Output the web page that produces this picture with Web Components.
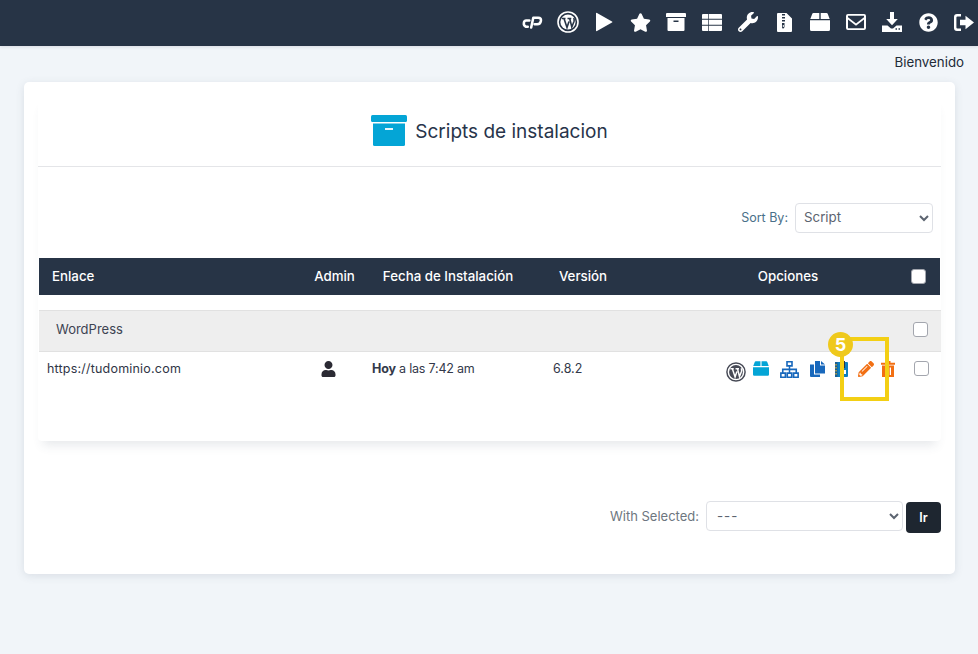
<!DOCTYPE html>
<html lang="es"><head><meta charset="utf-8"><title>Scripts de instalacion</title>
<style>
html,body{margin:0;padding:0;background:#f1f5f9;height:654px;overflow:hidden}
body{font-family:Inter,"Liberation Sans",sans-serif;color:#273446}
</style></head><body>
<app-topbar></app-topbar>
<welcome-line>Bienvenido</welcome-line>
<main-panel>
  <title-block>Scripts de instalacion</title-block>
  <sort-bar></sort-bar>
  <scripts-table></scripts-table>
</main-panel>
<script>
const ICONS={
cp:`<svg viewBox="0 0 40 26" width="21" height="14"><g fill="none" stroke="currentColor" stroke-width="4.800" stroke-linecap="round" stroke-linejoin="round"><path d="M14 10H8Q4 10 3.500 15T7.500 22H11"/><path d="M17.500 23.500L21.500 5H31Q37 5 36 11T29 17.500H24"/></g></svg>`,
wp:`<svg viewBox="0 0 22 22" width="22" height="22"><circle cx="11" cy="11" r="10" fill="none" stroke="currentColor" stroke-width="1.600"/><circle cx="11" cy="11" r="7.600" fill="currentColor"/><path d="M4.800 7.500H8.500M7 7.500L10 16.500L12 10.500M10.500 7.500H14.300M12.700 7.500L14.800 16L17 10.500Q17.600 8.500 16.600 7" fill="none" stroke="var(--wp-bg,#273446)" stroke-width="1.600"/></svg>`,
play:`<svg viewBox="0 0 18 20" width="18" height="20"><path d="M1 1.500Q1 .5 2 1L17 9.500Q18 10 17 10.500L2 19Q1 19.500 1 18.500Z" fill="currentColor"/></svg>`,
star:`<svg viewBox="0 0 576 512" width="21" height="19"><path fill="currentColor" d="M259.300 17.800L194 150.200 47.900 171.500c-26.200 3.800-36.700 36.100-17.700 54.600l105.700 103-25 145.500c-4.500 26.300 23.200 46 46.400 33.700L288 439.600l130.700 68.700c23.200 12.200 50.900-7.400 46.400-33.700l-25-145.500 105.700-103c19-18.500 8.500-50.800-17.700-54.600L382 150.200 316.700 17.800c-11.700-23.600-45.600-23.900-57.400 0z"/></svg>`,
archive:`<svg viewBox="0 0 20 18" width="20" height="18"><path fill="currentColor" fill-rule="evenodd" d="M1 0H19Q20 0 20 1V4H0V1Q0 0 1 0ZM1.500 5H18.500V17Q18.500 18 17.500 18H2.500Q1.500 18 1.500 17ZM7.500 7.500V9H12.500V7.500Z"/></svg>`,
table:`<svg viewBox="0 0 20 17" width="20" height="17"><path fill="currentColor" d="M1 0H6.300V4.800H0V1Q0 0 1 0ZM7 0H19Q20 0 20 1V4.800H7ZM0 5.800H6.300V10.800H0ZM7 5.800H20V10.800H7ZM0 11.800H6.300V17H1Q0 17 0 16ZM7 11.800H20V16Q20 17 19 17H7Z"/></svg>`,
wrench:`<svg viewBox="0 0 512 512" width="20" height="20"><path fill="currentColor" d="M507.730 109.100c-2.240-9.030-13.540-12.090-20.120-5.510l-74.360 74.360-67.880-11.310-11.310-67.880 74.360-74.360c6.620-6.620 3.430-17.900-5.660-20.160-47.380-11.740-99.550.91-136.580 37.930-39.640 39.640-50.550 97.100-34.050 147.200L18.740 402.760c-24.990 24.990-24.990 65.510 0 90.500 24.990 24.990 65.510 24.990 90.500 0l213.210-213.210c50.120 16.710 107.470 5.680 147.370-34.220 37.070-37.070 49.700-89.320 37.910-136.730zM64 472c-13.250 0-24-10.750-24-24 0-13.260 10.750-24 24-24s24 10.740 24 24c0 13.250-10.750 24-24 24z"/></svg>`,
zip:`<svg viewBox="0 0 15 19" width="15" height="19"><path fill="currentColor" fill-rule="evenodd" d="M1 0H9.500L15 5.500V18Q15 19 14 19H1Q0 19 0 18V1Q0 0 1 0ZM5 1V2.500H6.500V4H5V5.500H6.500V7H5V8.500H6.500V10H5V14Q5 15.500 6 15.500T7.500 14V10H6.500V8.500H8V7H6.500V5.500H8V4H6.500V2.500H8V1ZM5.800 12V14H6.800V12Z"/></svg>`,
box:`<svg viewBox="0 0 20 18" width="20" height="18"><path fill="currentColor" d="M3.500 0H9.300V6H0.300L2.200 .9Q2.500 0 3.500 0ZM10.700 0H16.500Q17.500 0 17.800 .9L19.700 6H10.700ZM0 7.300H20V16.500Q20 18 18.500 18H1.500Q0 18 0 16.500Z"/></svg>`,
mail:`<svg viewBox="0 0 20 16" width="20" height="16"><path fill="currentColor" fill-rule="evenodd" d="M2 0H18Q20 0 20 2V14Q20 16 18 16H2Q0 16 0 14V2Q0 0 2 0ZM2 1.700V3.200L10 9.500L18 3.200V1.700ZM2 5.400V14.300H18V5.400L10 11.700Z"/></svg>`,
down:`<svg viewBox="0 0 20 20" width="20" height="20"><path fill="currentColor" d="M8 0H12V7H15.800L10 13.200L4.200 7H8ZM0 13.500H5.500L9 16.500H11L14.500 13.500H20V20H0ZM13.500 16.200V17.700H15V16.200ZM16.500 16.200V17.700H18V16.200Z"/></svg>`,
help:`<svg viewBox="0 0 512 512" width="19" height="19"><path fill="currentColor" d="M504 256c0 136.997-111.043 248-248 248S8 392.997 8 256C8 119.083 119.043 8 256 8s248 111.083 248 248zM262.655 90c-54.497 0-89.255 22.957-116.549 63.758-3.536 5.286-2.353 12.415 2.715 16.258l34.699 26.310c5.205 3.947 12.621 3.008 16.665-2.122 17.864-22.658 30.113-35.797 57.303-35.797 20.429 0 45.698 13.148 45.698 32.958 0 14.976-12.363 22.667-32.534 33.976C247.128 238.528 216 254.941 216 296v4c0 6.627 5.373 12 12 12h56c6.627 0 12-5.373 12-12v-1.333c0-28.462 83.186-29.647 83.186-106.667 0-58.002-60.165-102-116.531-102zM256 338c-25.365 0-46 20.635-46 46 0 25.364 20.635 46 46 46s46-20.636 46-46c0-25.365-20.635-46-46-46z"/></svg>`,
out:`<svg viewBox="0 0 20 17" width="20" height="17"><path fill="currentColor" d="M3 0H7V2.400H3.500Q2.400 2.400 2.400 3.500V13.500Q2.400 14.600 3.500 14.600H7V17H3Q0 17 0 14V3Q0 0 3 0ZM11.500 1.800L20 8.500L11.500 15.200V11.300H6V5.700H11.500Z"/></svg>`,
user:`<svg viewBox="0 0 448 512" width="15" height="16"><path fill="currentColor" d="M224 256c70.700 0 128-57.300 128-128S294.700 0 224 0 96 57.300 96 128s57.300 128 128 128zm89.600 32h-16.700c-22.200 10.200-46.900 16-72.900 16s-50.600-5.800-72.900-16h-16.700C60.200 288 0 348.200 0 422.400V464c0 26.500 21.500 48 48 48h352c26.500 0 48-21.500 48-48v-41.600c0-74.200-60.200-134.400-134.400-134.400z"/></svg>`,
net:`<svg viewBox="0 0 20 18" width="21" height="17"><path fill="currentColor" fill-rule="evenodd" d="M6.500 0H13.500V6H10.800V8H18V12H20V18H13.500V12H16.300V9.700H10.800V12H13.200V18H6.800V12H9.200V9.700H3.700V12H6.500V18H0V12H2V8H9.200V6H6.500ZM8.200 1.700V4.300H11.800V1.700ZM1.700 13.700V16.300H4.800V13.700ZM8.500 13.700V16.300H11.500V13.700ZM15.200 13.700V16.300H18.300V13.700Z"/></svg>`,
copy:`<svg viewBox="0 0 15 16" width="15" height="16"><path fill="currentColor" d="M5 0H10V4.500H15V12.500H5Z"/><path fill="currentColor" d="M11 0L15 3.500H11Z"/><path fill="currentColor" d="M0 3.500H4V13.500H10V16H1Q0 16 0 15Z"/></svg>`,
note:`<svg viewBox="0 0 13 16" width="13" height="16"><rect x="0" y="1" width="13" height="15" rx="1" fill="#0d7fc0"/><rect x="0" y="1" width="2.500" height="15" fill="#1c5f92"/><path d="M1 3V14" stroke="#e9b52b" stroke-dasharray="1.500 1.500" stroke-width="1.200"/><rect x="6" y="0" width="4" height="7" fill="#27344a"/><rect x="5" y="9" width="6" height="4" fill="#fff"/></svg>`,
pencil:`<svg viewBox="0 0 512 512" width="16" height="16"><path fill="currentColor" d="M497.900 142.100l-46.100 46.100c-4.700 4.700-12.300 4.700-17 0l-111-111c-4.700-4.700-4.700-12.300 0-17l46.100-46.100c18.700-18.700 49.100-18.700 67.900 0l60.100 60.100c18.800 18.700 18.800 49.100 0 67.900zM284.200 99.800L21.600 362.400.4 483.900c-2.900 16.400 11.400 30.600 27.800 27.800l121.500-21.300 262.600-262.600c4.700-4.700 4.700-12.300 0-17l-111-111c-4.800-4.700-12.400-4.700-17.100 0zM124.100 339.900c-5.500-5.500-5.500-14.300 0-19.800l154-154c5.500-5.500 14.300-5.500 19.800 0s5.500 14.300 0 19.800l-154 154c-5.500 5.500-14.300 5.500-19.800 0zM88 424h48v36.300l-64.500 11.300-31.100-31.100L51.700 376H88v48z"/></svg>`,
trash:`<svg viewBox="0 0 14 16" width="14" height="16"><path fill="currentColor" fill-rule="evenodd" d="M4.500 0H9.500V1.800H14V3.800H0V1.800H4.500ZM1 4.600H13V16H1ZM4 6.500V14H5.300V6.500ZM8.700 6.500V14H10V6.500Z"/></svg>`
};
function def(name,html,init){
  customElements.define(name,class extends HTMLElement{
    connectedCallback(){ if(this.shadowRoot)return; const r=this.attachShadow({mode:'open'}); r.innerHTML=html; init&&init(r,this);}
  });
}
def('ui-icon',`<style>:host{display:inline-flex;align-items:center;justify-content:center;line-height:0}</style><span></span>`,(r,h)=>{
  const s=r.querySelector('span'); s.innerHTML=ICONS[h.getAttribute('name')]||'';
  const v=s.firstChild; if(h.hasAttribute('w'))v.setAttribute('width',h.getAttribute('w')); if(h.hasAttribute('h'))v.setAttribute('height',h.getAttribute('h'));
});

def('app-topbar',`<style>
:host{display:flex;justify-content:flex-end;align-items:center;height:46px;box-sizing:border-box;padding-bottom:2px;background:#273446;color:#fff;box-shadow:0 1px 3px rgba(40,50,70,.12);--wp-bg:#273446}
ui-icon{width:36px;height:22px}
.row{display:flex;margin-right:-4px}
</style><div class="row"></div>`,(r)=>{
 r.querySelector('.row').innerHTML=['cp','wp','play','star','archive','table','wrench','zip','box','mail','down','help','out'].map(n=>`<ui-icon name="${n}"></ui-icon>`).join('');
});

def('welcome-line',`<style>:host{display:block;height:36px;box-sizing:border-box;padding:7px 14px 0 0;text-align:right;font:13.300px/18px Inter,sans-serif;color:#222b38}</style><slot></slot>`);

def('main-panel',`<style>
:host{display:block;margin:0 23px 0 24px;height:492px;background:#fff;border-radius:5px;box-shadow:0 2px 8px rgba(60,75,100,.13);padding:14px;box-sizing:border-box}
.inner{height:345px;border-radius:4px;box-shadow:0 9px 10px -5px rgba(60,75,100,.13);box-sizing:border-box}
</style><div class="inner"><slot></slot></div><bulk-bar></bulk-bar>`);

def('title-block',`<style>
:host{display:flex;justify-content:center;align-items:center;gap:8px;height:70px;border-bottom:1px solid #e4e5e8;font:400 19px/24px Inter,sans-serif;color:#27344a}
svg{display:block;margin-bottom:1px}
span{padding-top:2px}
</style><svg width="36" height="31" viewBox="0 0 36 31"><rect x="0" y="0" width="36" height="7" rx="1.500" fill="#04a5d6"/><path d="M2 8.500H34V29.500Q34 31 32.500 31H3.500Q2 31 2 29.500Z" fill="#04a5d6"/><rect x="14" y="13" width="8" height="2" fill="#e6f6fb"/></svg><span><slot></slot></span>`);

def('sort-bar',`<style>
:host{display:flex;justify-content:flex-end;align-items:center;gap:7px;padding:36px 8px 25px 0;font:12.500px/18px Inter,sans-serif;color:#4a7089}
select{width:138px;height:30px;border:1px solid #dfe1e6;border-radius:4px;background:#fff;color:#5c6470;font:13.300px Inter,sans-serif;padding:0 0 2px 4px}
</style><span>Sort By:</span><select><option>Script</option></select>`);

def('check-box',`<style>
:host{display:inline-block;line-height:0}
input{appearance:none;-webkit-appearance:none;margin:0;width:15px;height:15px;box-sizing:border-box;border:1.500px solid #a3a6ae;border-radius:3px;background:#fff;display:block}
</style><input type="checkbox">`);

def('scripts-table',`<style>
:host{display:block;padding:0 1px;font:12.500px/18px Inter,sans-serif;color:#33394a}
.grid{display:grid;grid-template-columns:268px 55px 172px 98px 272px 36px;align-items:center}
.head{height:37px;box-sizing:border-box;padding-bottom:2px;background:#273446;color:#fff;font-weight:500;font-size:13.300px;margin-bottom:15px}
.head>*{text-align:center}
.head>:first-child{text-align:left;padding-left:13px}
.head>.opc{padding-left:40px}
.end{display:flex;justify-content:flex-start}
.group{height:42px;box-sizing:border-box;background:#eee;border-top:1px solid #e1e1e1;border-bottom:1px solid #e1e1e1;display:flex;align-items:center;justify-content:space-between;padding:0 13px 4px 17px;margin:0 -1px 0 0;font-size:13px;color:#3d4352}
.row{position:relative;align-items:start;padding-top:9px;height:45px}
.row>.t{margin-top:-1px}
.url{padding-left:8px;color:#2f3646;letter-spacing:.2px}
.adm{display:flex;justify-content:center;color:#2b2a33}
.date{padding-left:10px;letter-spacing:-.2px}
.date b{font-weight:700}
.ver{margin-left:19px}
.ops{display:flex;align-items:flex-start;padding-left:94px;height:24px}
.mark{position:absolute;left:801px;top:-15px;width:49px;height:64px;box-sizing:border-box;border:4px solid #f3cf14;pointer-events:none}
.badge{position:absolute;left:-16px;top:-9px;width:25px;height:25px;border-radius:50%;background:#efc91c;color:#fff;font:700 18px/25px Inter,sans-serif;text-align:center}
</style>
<div class="grid head"><div>Enlace</div><div>Admin</div><div>Fecha de Instalación</div><div>Versión</div><div class="opc">Opciones</div><div class="end"><check-box style="margin-left:7px;margin-top:1px"></check-box></div></div>
<div class="group"><span>WordPress</span><check-box></check-box></div>
<div class="grid row">
 <div class="url t">https://tudominio.com</div>
 <div class="adm"><ui-icon name="user" style="margin-left:-13px"></ui-icon></div>
 <div class="date t"><b>Hoy</b> a las 7:42 am</div>
 <div class="ver t">6.8.2</div>
 <div class="ops">
  <ui-icon name="wp" w="20" h="20" style="color:#474a56;--wp-bg:#fff;margin:1px 7px 0 0"></ui-icon>
  <ui-icon name="box" w="16" h="17" style="color:#04a5d6;margin:-1px 10px 0 0"></ui-icon>
  <ui-icon name="net" style="color:#1868bc;margin-right:10px"></ui-icon>
  <ui-icon name="copy" style="color:#1868bc;margin-right:10px"></ui-icon>
  <ui-icon name="note" style="margin-right:10px"></ui-icon>
  <ui-icon name="pencil" style="color:#f26f13;margin-right:7px"></ui-icon>
  <ui-icon name="trash" style="color:#f26f13"></ui-icon>
 </div>
 <div class="end"><check-box style="margin-left:10px"></check-box></div>
 <div class="mark"><div class="badge">5</div></div>
</div>`);

def('bulk-bar',`<style>
:host{display:flex;justify-content:flex-end;align-items:flex-start;margin-top:60px;font:13px/31px Inter,sans-serif;color:#6d7680}
span{margin-right:7px}
select{width:197px;height:30px;border:1px solid #dfe1e6;border-radius:4px;background:#fff;color:#5c6470;font:13.300px Inter,sans-serif;letter-spacing:1px;padding:0 0 0 6px;margin-right:3px}
button{width:35px;height:31px;margin-top:1px;border:0;border-radius:4px;background:#1e2630;color:#fff;font:600 12.500px Inter,sans-serif;padding:0}
</style><span>With Selected:</span><select><option>---</option></select><button>Ir</button>`);
</script>
</body></html>
